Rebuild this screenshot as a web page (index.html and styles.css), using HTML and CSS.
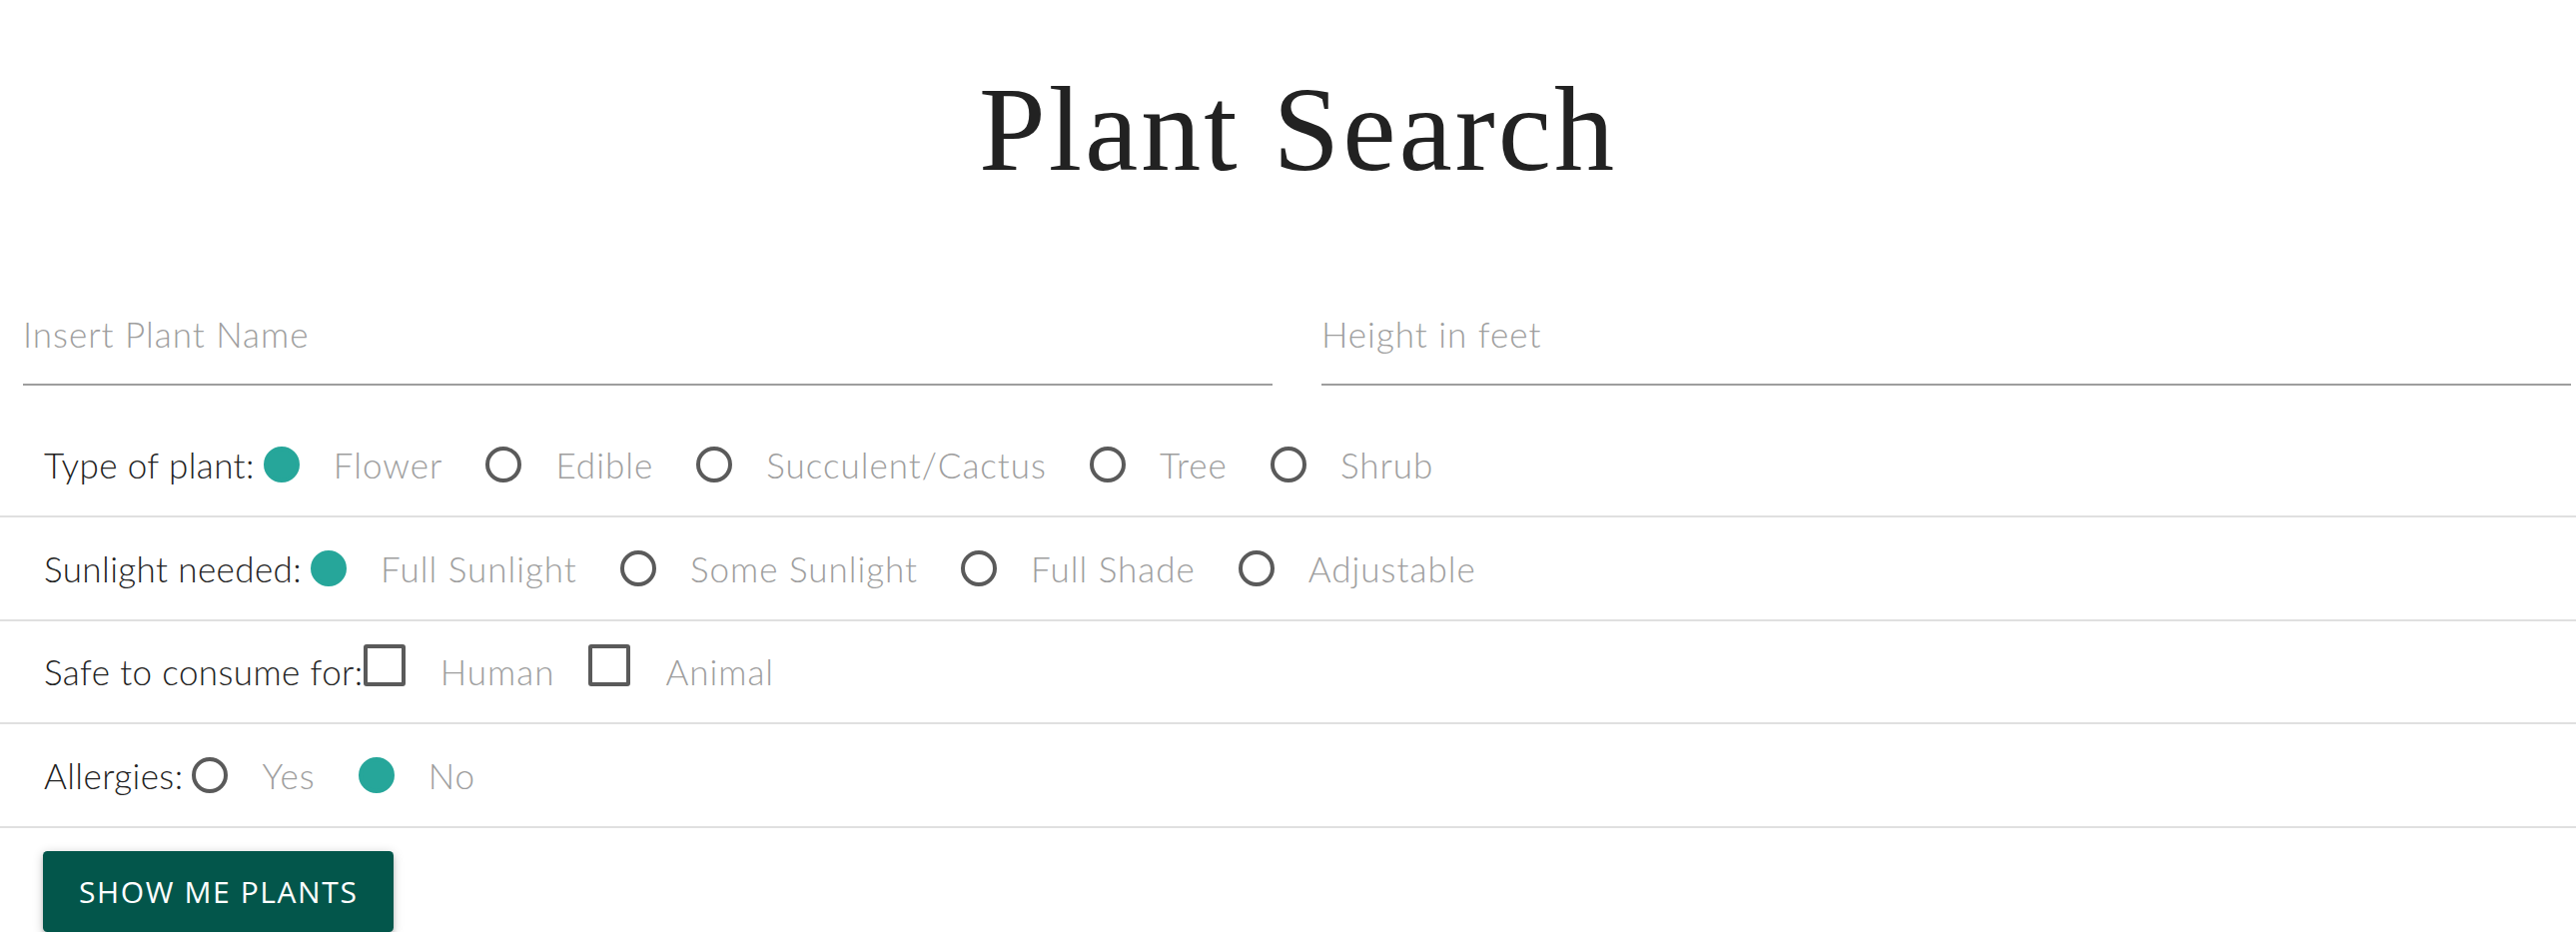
FILE: index.html
```html
<!DOCTYPE html>
<html lang="en">
<head>
<meta charset="utf-8">
<title>Plant Search</title>
<link rel="stylesheet" href="styles.css">
</head>
<body>
<h1 class="title">Plant Search</h1>
<form class="search-form">
  <div class="inputs">
    <div class="field"><input type="text" placeholder="Insert Plant Name"></div>
    <div class="field"><input type="text" placeholder="Height in feet"></div>
  </div>

  <div class="filter-row">
    <span class="filter-label">Type of plant:</span>
    <label class="opt"><span class="radio checked"></span><span class="opt-text">Flower</span></label>
    <label class="opt"><span class="radio"></span><span class="opt-text">Edible</span></label>
    <label class="opt"><span class="radio"></span><span class="opt-text">Succulent/Cactus</span></label>
    <label class="opt"><span class="radio"></span><span class="opt-text">Tree</span></label>
    <label class="opt"><span class="radio"></span><span class="opt-text">Shrub</span></label>
  </div>

  <div class="filter-row">
    <span class="filter-label">Sunlight needed:</span>
    <label class="opt"><span class="radio checked"></span><span class="opt-text">Full Sunlight</span></label>
    <label class="opt"><span class="radio"></span><span class="opt-text">Some Sunlight</span></label>
    <label class="opt"><span class="radio"></span><span class="opt-text">Full Shade</span></label>
    <label class="opt"><span class="radio"></span><span class="opt-text">Adjustable</span></label>
  </div>

  <div class="filter-row">
    <span class="filter-label">Safe to consume for:</span>
    <label class="opt"><span class="checkbox"></span><span class="opt-text">Human</span></label>
    <label class="opt"><span class="checkbox"></span><span class="opt-text">Animal</span></label>
  </div>

  <div class="filter-row">
    <span class="filter-label">Allergies:</span>
    <label class="opt"><span class="radio"></span><span class="opt-text">Yes</span></label>
    <label class="opt"><span class="radio checked"></span><span class="opt-text">No</span></label>
  </div>

  <div class="actions">
    <button type="button" class="btn">SHOW ME PLANTS</button>
  </div>
</form>
</body>
</html>
```
FILE: styles.css
```css
html, body {
  margin: 0;
  padding: 0;
  background: #fff;
}

body {
  font-family: "Lato", "Open Sans", sans-serif;
  font-weight: 300;
  color: #222;
}

.title {
  margin: 65px 0 0;
  padding-left: 20px;
  height: 130px;
  font-family: "Liberation Serif", "Times New Roman", serif;
  font-weight: 400;
  font-size: 120px;
  letter-spacing: 3px;
  line-height: 130px;
  text-align: center;
  color: #222;
}

.search-form {
  margin: 0;
}

.inputs {
  display: flex;
  gap: 49px;
  padding: 0 5px 0 23px;
  margin-top: 88px;
}

.field {
  flex: 1;
}

.field input {
  display: block;
  width: 100%;
  box-sizing: border-box;
  height: 103px;
  margin: 0;
  padding: 0;
  border: none;
  border-bottom: 2px solid #9e9e9e;
  outline: none;
  background: transparent;
  font-family: "Lato", "Open Sans", sans-serif;
  font-weight: 300;
  font-size: 35px;
  letter-spacing: 1px;
  color: #222;
}

.field input::placeholder {
  color: #9e9e9e;
  opacity: 1;
}

.filter-row {
  display: flex;
  align-items: center;
  height: 101.5px;
  border-bottom: 2px solid #e0e0e0;
  padding-left: 44px;
  font-size: 35px;
  letter-spacing: 1px;
}

.inputs + .filter-row {
  margin-top: 28.5px;
}

.filter-label {
  color: #222;
  letter-spacing: 0.4px;
  white-space: nowrap;
}

.opt {
  display: flex;
  align-items: center;
  margin-right: 34px;
  cursor: pointer;
}

.opt-text {
  color: #9e9e9e;
  white-space: nowrap;
}

.radio {
  width: 36px;
  height: 36px;
  box-sizing: border-box;
  margin: 0 34px 0 9px;
  border: 4.5px solid #5a5a5a;
  border-radius: 50%;
  flex: none;
}

.radio.checked {
  border-color: #26a69a;
  background: #26a69a;
}

.checkbox {
  width: 42px;
  height: 42px;
  box-sizing: border-box;
  margin: 0 35px 12px 0;
  border: 4.5px solid #5a5a5a;
  border-radius: 3px;
  flex: none;
}

.actions {
  padding: 23px 0 0 43px;
}

.btn {
  display: block;
  height: 81px;
  padding: 0 36px;
  border: none;
  border-radius: 4.5px;
  background: #03564b;
  color: #fff;
  font-family: "Open Sans", "Noto Sans", sans-serif;
  font-weight: 400;
  font-size: 30px;
  letter-spacing: 1.6px;
  box-shadow: 0 4.5px 4.5px 0 rgba(0,0,0,0.14), 0 6.75px 2.25px -4.5px rgba(0,0,0,0.12), 0 2.25px 11px 0 rgba(0,0,0,0.2);
  cursor: pointer;
}
```
